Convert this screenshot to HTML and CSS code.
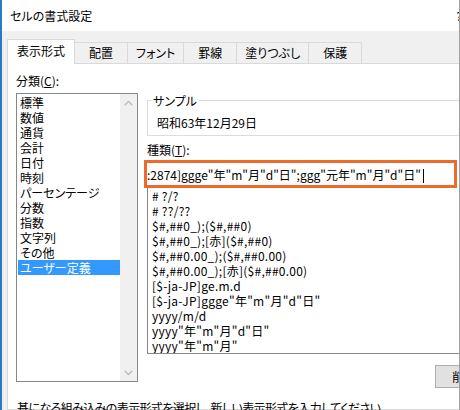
FILE: index.html
```html
<!DOCTYPE html>
<html lang="ja">
<head>
<meta charset="utf-8">
<title>セルの書式設定</title>
<link rel="stylesheet" href="styles.css">
</head>
<body>
<div class="window">
  <div class="titlebar">
    <span class="title">セルの書式設定</span>
    <span class="help">?</span>
  </div>
  <div class="client">
    <div class="tabs">
      <div class="tab active">表示形式</div>
      <div class="tab">配置</div>
      <div class="tab">フォント</div>
      <div class="tab">罫線</div>
      <div class="tab">塗りつぶし</div>
      <div class="tab">保護</div>
    </div>
    <div class="panel">
      <div class="columns">
        <div class="col-left">
          <div class="label">分類(<u>C</u>):</div>
          <div class="listbox">
            <ul class="items">
              <li>標準</li>
              <li>数値</li>
              <li>通貨</li>
              <li>会計</li>
              <li>日付</li>
              <li>時刻</li>
              <li>パーセンテージ</li>
              <li>分数</li>
              <li>指数</li>
              <li>文字列</li>
              <li>その他</li>
              <li class="selected">ユーザー定義</li>
            </ul>
            <div class="vscroll">
              <span class="sbtn"><svg width="9" height="6" viewBox="0 0 9 6"><path d="M0.7 5.2 L4.5 1.4 L8.3 5.2" fill="none" stroke="#bdbdbd" stroke-width="1.4"/></svg></span>
              <span class="sbtn"><svg width="9" height="6" viewBox="0 0 9 6"><path d="M0.7 0.8 L4.5 4.6 L8.3 0.8" fill="none" stroke="#bdbdbd" stroke-width="1.4"/></svg></span>
            </div>
          </div>
        </div>
        <div class="col-right">
          <fieldset class="sample">
            <legend>サンプル</legend>
            <div class="sample-value">昭和63年12月29日</div>
          </fieldset>
          <div class="label type-label">種類(<u>T</u>):</div>
          <div class="highlight">
            <div class="format-input">:2874]ggge"年"m"月"d"日";ggg"元年"m"月"d"日"<span class="caret"></span></div>
          </div>
          <ul class="format-list">
            <li># ?/?</li>
            <li># ??/??</li>
            <li>$#,##0_);($#,##0)</li>
            <li>$#,##0_);[赤]($#,##0)</li>
            <li>$#,##0.00_);($#,##0.00)</li>
            <li>$#,##0.00_);[赤]($#,##0.00)</li>
            <li>[$-ja-JP]ge.m.d</li>
            <li>[$-ja-JP]ggge"年"m"月"d"日"</li>
            <li>yyyy/m/d</li>
            <li>yyyy"年"m"月"d"日"</li>
            <li>yyyy"年"m"月"</li>
          </ul>
          <div class="actions">
            <button class="btn">削除(<u>D</u>)</button>
          </div>
        </div>
      </div>
      <p class="hint">基になる組み込みの表示形式を選択し、新しい表示形式を入力してください。</p>
    </div>
  </div>
</div>
</body>
</html>
```

FILE: styles.css
```css
html, body {
  margin: 0;
  padding: 0;
}

body {
  width: 460px;
  height: 410px;
  overflow: hidden;
  background: #ffffff;
  color: #000000;
  font-family: "Noto Sans CJK JP", "Noto Sans", sans-serif;
  font-size: 12px;
  line-height: 15px;
  font-feature-settings: "palt";
}

.window {
  width: 460px;
  height: 410px;
  box-sizing: border-box;
  border-left: 2px solid #2b79c2;
  border-right: 1px solid #a0a0a0;
  overflow: hidden;
  display: flex;
  flex-direction: column;
  background: #f0f0f0;
}

.titlebar {
  flex: none;
  height: 31px;
  background: #ffffff;
  display: flex;
  align-items: center;
  justify-content: space-between;
  padding-left: 8px;
}

.title {
  line-height: 15px;
}

.help {
  margin-right: -3px;
}

.client {
  flex: 1;
  display: flex;
  flex-direction: column;
  padding: 8px 0 0 5px;
  min-height: 0;
}

.tabs {
  flex: none;
  display: flex;
  align-items: flex-end;
  height: 24px;
}

.tab {
  box-sizing: border-box;
  height: 21px;
  min-width: 54px;
  padding: 0 8px;
  margin-left: -1px;
  border: 1px solid #d9d9d9;
  border-bottom: none;
  background: #f0f0f0;
  text-align: center;
  line-height: 20px;
  white-space: nowrap;
}

.tab.active {
  position: relative;
  z-index: 1;
  height: 25px;
  margin-left: 0;
  margin-bottom: -1px;
  padding: 1px 9px 0;
  background: #ffffff;
}

.panel {
  flex: 1;
  min-height: 0;
  background: #ffffff;
  border: 1px solid #d9d9d9;
  border-right: none;
  padding: 9px 0 0 8px;
}

.columns {
  display: grid;
  grid-template-columns: 122px 420px;
  column-gap: 9px;
  align-items: start;
}

.label {
  height: 15px;
  white-space: nowrap;
}

.listbox {
  margin-top: 5px;
  height: 289px;
  box-sizing: border-box;
  border: 1px solid #828790;
  display: flex;
}

.items {
  list-style: none;
  margin: 0;
  padding: 1px 0 0 1px;
  width: 103px;
  box-sizing: border-box;
}

.items li {
  height: 15px;
  padding-left: 2px;
  white-space: nowrap;
}

.items li.selected {
  background: #3399ff;
  color: #ffffff;
}

.vscroll {
  width: 17px;
  background: #f0f0f0;
  display: flex;
  flex-direction: column;
  justify-content: space-between;
}

.sbtn {
  height: 17px;
  display: flex;
  align-items: center;
  justify-content: center;
}

.sample {
  margin: 20px 0 0 0;
  padding: 0;
  border: 1px solid #dcdcdc;
  min-width: 0;
}

.sample legend {
  margin-left: 3px;
  padding: 0 2px;
  line-height: 15px;
}

.sample-value {
  padding: 7px 0 5px 9px;
}

.type-label {
  margin-top: 6px;
}

.highlight {
  position: relative;
  z-index: 1;
  margin: 3px 0 0 -3px;
  width: 313px;
  height: 28px;
  box-sizing: border-box;
  border: 3px solid #ee6a2a;
  background: #ffffff;
}

.format-input {
  padding: 4px 0 0 0;
  white-space: nowrap;
  overflow: hidden;
}

.caret {
  display: inline-block;
  width: 0;
  height: 14px;
  margin-left: 2px;
  border-left: 1px solid #000000;
  vertical-align: -3px;
}

.format-list {
  list-style: none;
  margin: 0;
  padding: 0 0 0 4px;
  height: 166px;
  box-sizing: border-box;
  border: 1px solid #828790;
  border-top: none;
  overflow: hidden;
  letter-spacing: 0.25px;
}

.format-list li {
  height: 15px;
  white-space: nowrap;
}

.actions {
  margin-top: 11px;
  padding-left: 288px;
}

.btn {
  width: 75px;
  height: 23px;
  box-sizing: border-box;
  border: 1px solid #adadad;
  background: #e1e1e1;
  font: inherit;
  color: #000000;
  padding: 0;
  white-space: nowrap;
}

.hint {
  margin: 12px 0 0 1px;
  white-space: nowrap;
  letter-spacing: -0.6px;
}
```
